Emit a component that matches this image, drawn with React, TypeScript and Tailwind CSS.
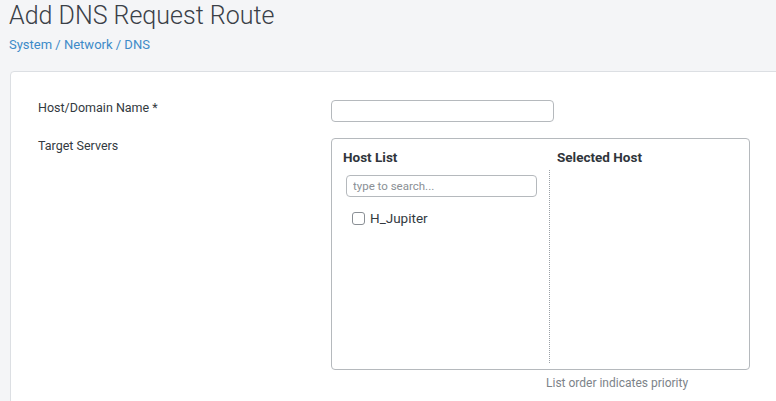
import { useState } from "react";

const hosts = ["H_Jupiter"];

const App = () => {
  const [checked, setChecked] = useState<Record<string, boolean>>({});
  const [search, setSearch] = useState("");

  return (
    <div className="h-[401px] w-full overflow-hidden bg-[#f4f5f7] pl-[9px] font-['Roboto',sans-serif] text-[#333a41]">
      <h1 className="pt-[2px] text-[25px] leading-[28px] font-light text-[#3a4047]">
        Add DNS Request Route
      </h1>
      <div className="mt-[8px] text-[13px] leading-[14px] text-[#3d8bc8]">
        System / Network / DNS
      </div>
      <div className="mt-[19px] ml-[1px] mr-[-6px] h-[400px] rounded-tl-[4px] border border-[#dcdfe3] bg-white pl-[27px] pt-[28px]">
        <div className="flex items-start">
          <label className="w-[293px] pt-[1px] text-[12.5px] leading-[14px]">
            Host/Domain Name *
          </label>
          <input
            type="text"
            className="h-[22px] w-[223px] rounded-[4px] border border-[#b5b9bd] px-2 text-[12px] outline-none"
          />
        </div>
        <div className="mt-[16px] flex items-start">
          <label className="w-[293px] pt-[1px] text-[12.5px] leading-[14px]">
            Target Servers
          </label>
          <div>
            <div className="flex h-[232px] w-[419px] rounded-[4px] border border-[#b5b9bd]">
              <div className="flex w-[217px] flex-col pl-[11px] pt-[10px]">
                <div className="text-[13.5px] leading-[16px] font-bold text-[#2f353b]">
                  Host List
                </div>
                <input
                  type="text"
                  value={search}
                  onChange={(e) => setSearch(e.target.value)}
                  placeholder="type to search..."
                  className="mt-[10px] ml-[3px] h-[22px] w-[191px] rounded-[4px] border border-[#b5b9bd] px-[6px] text-[11.5px] outline-none placeholder:text-[#8a8f95]"
                />
                <div className="mt-[14px] ml-[9px] flex flex-col gap-2">
                  {hosts
                    .filter((h) => h.toLowerCase().includes(search.toLowerCase()))
                    .map((h) => (
                      <label key={h} className="flex items-center gap-[5px]">
                        <input
                          type="checkbox"
                          checked={!!checked[h]}
                          onChange={() => setChecked({ ...checked, [h]: !checked[h] })}
                          className="size-[13px] appearance-none rounded-[3px] border border-[#8a8f95] bg-white"
                        />
                        <span className="text-[13.5px] leading-[14px] text-[#333a41]">{h}</span>
                      </label>
                    ))}
                </div>
              </div>
              <div className="mt-[31px] mb-[6px] border-l border-dotted border-[#9aa0a6]" />
              <div className="pl-[7px] pt-[10px]">
                <div className="text-[13.5px] leading-[16px] font-bold text-[#2f353b]">
                  Selected Host
                </div>
              </div>
            </div>
            <div className="mt-[7px] pl-[215px] text-[12px] leading-[13px] text-[#7d8389]">
              List order indicates priority
            </div>
          </div>
        </div>
      </div>
    </div>
  );
};

export default App;
